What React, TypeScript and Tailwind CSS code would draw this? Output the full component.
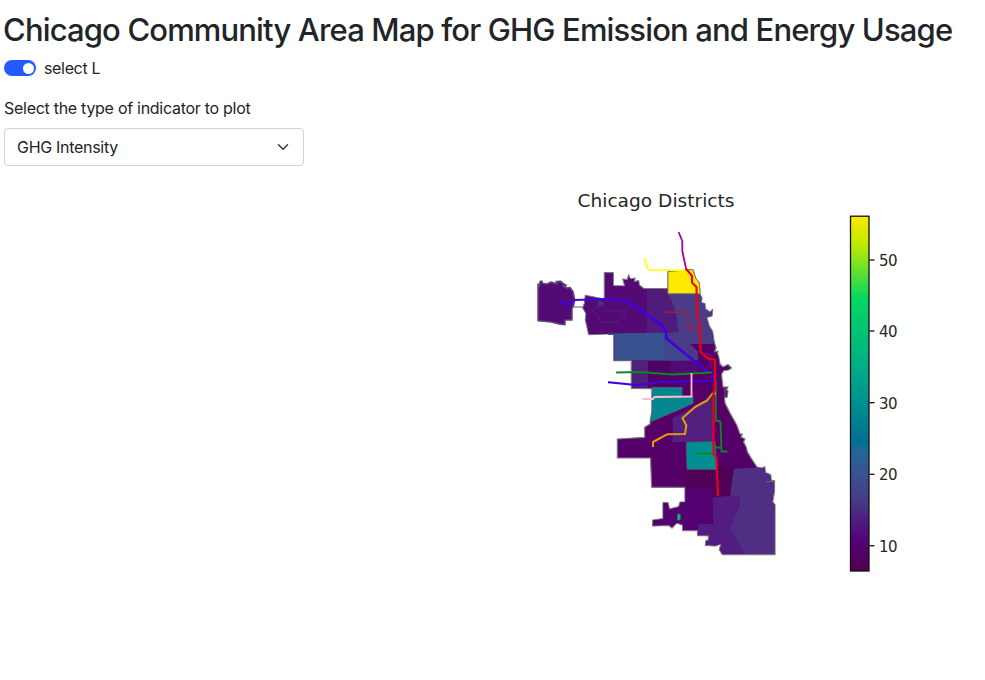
import { useState } from 'react';

const ticks = [
  { value: 50, y: 260 },
  { value: 40, y: 331 },
  { value: 30, y: 402.7 },
  { value: 20, y: 474.3 },
  { value: 10, y: 545.7 },
];

function ChicagoMap({ showLines }: { showLines: boolean }) {
  return (
    <svg
      className="block w-full"
      viewBox="0 180 985 400"
      width="985"
      height="400"
      role="img"
      aria-label="Chicago Districts"
    >
      <defs>
        <linearGradient id="scale" x1="0" y1="0" x2="0" y2="1">
          <stop offset="0" stopColor="#fbe900" />
          <stop offset="0.08" stopColor="#bfe900" />
          <stop offset="0.235" stopColor="#02d763" />
          <stop offset="0.42" stopColor="#01af85" />
          <stop offset="0.52" stopColor="#009190" />
          <stop offset="0.635" stopColor="#006f93" />
          <stop offset="0.66" stopColor="#216895" />
          <stop offset="0.73" stopColor="#3a5190" />
          <stop offset="0.8" stopColor="#473a87" />
          <stop offset="0.9" stopColor="#54087a" />
          <stop offset="0.93" stopColor="#530070" />
          <stop offset="1" stopColor="#50004e" />
        </linearGradient>
      </defs>

      <g fontFamily="'DejaVu Sans', sans-serif" fill="#262626">
        <text x="577.5" y="207" fontSize="18" textLength="157" lengthAdjust="spacingAndGlyphs">
          Chicago Districts
        </text>
        {ticks.map((t) => (
          <text key={t.value} x="879" y={t.y + 6} fontSize="15" textLength="18.5">
            {t.value}
          </text>
        ))}
      </g>

      {/* City outline */}
      <g fill="#540068" stroke="#7d7880" strokeWidth="1.2" strokeLinejoin="round">
        <path
          fill="#530a75"
          stroke="#66477a"
          strokeWidth="1.5"
          d="M538 284L539.5 286L540 281.5L541.7 281L543 283.5L547 284L551 282L557 284L556 281.5L560.7 281.3L564 284L566.5 285.5L563 286L567 288L570 287.5L573 291.5L574.7 300L573.5 306L572 308.7V320H565V324.7L559 324L551 322L538 320.7Z"
        />
        <path d="M573.5 307H583.5" />
        <path d="M585.3 295.3L604.3 299V272.7H613.3V285.7L624.7 286L622.7 279L627.3 279.7L628.7 274.7L630 279L635.3 278L634 281.5L638.7 280.7L639.3 285L644 288.7H668V271.5L692.7 269.5L696 279L699.3 282.7L700 294L702 298L701.3 302.7L705 303.5L705.3 308.7L710 312L712.7 309.5L712 316L706.7 317.5L709.3 326L712.7 331.5L714 341L716 348L714.5 352L718 351L717.5 353L719 358L720 364L723 367L728 364.5L731.5 368L728.5 370L724 370.5L721.5 374L723 387H728L726.5 390L728 391L727 397.5H724.5L725 403L730 413L736.7 425L740 434L742.5 434L741 437L745 439L743.5 442L746 446.5L747.5 452L751 458L757 467L762 468.5L764.7 466.7L765.5 472.5L770.7 474.7L771.3 480.5H774.5V491L772.7 502L775 504.7V554.7H722.3L719.3 549.5L721 544L715.3 546L705.3 545.3L706 540.5L708.3 540V535.7H697.5V530.7H682.7V525.3L676.7 523L672 528L668.7 525.3L652.7 526V520L663 518.7V502.7H668L669.5 509L678.7 506.7L680 502H685V487.3H651.7L650.5 458H617.3V439L644.7 437.3V427.3L650 424L652 411V388.7L631.3 388.3V360.7H613.7V334H607.3L588.7 334.7L586.7 325.5L585.3 319.5L586 313.5L582.7 308L584.5 303Z" />
      </g>

      {/* Community areas */}
      <g>
        <path
          fill="#530a75"
          d="M585.8 296L605 299.5V273.3H612.8V286.3L625.5 286.5L624 280H628L629 276.5L631 280L634 279L633 282.5L638 281.5L639 285.8L644 289.2H648V333.3L589 334L587.3 325.5L586 319.5L586.6 313.5L583.4 308L585.2 303Z"
        />
        <path fill="#42317e" d="M597 300L604 302L603 305.5L598 305.7Z" />
        <path
          fill="none"
          stroke="#4d2576"
          strokeWidth="1"
          d="M592 311.3L596 307.3L603.3 305.3L607 311L624.7 310.7V314.7L617.3 321.3L600.7 323L598 314.7L592 311.3"
        />
        <path fill="#511b7b" d="M647 289.3H669L671.3 300L675.3 310L677 319L676 325L680 331L647 333.3Z" />
        <path fill="#3a518f" d="M608 333.5L665 332.5V360.5H614.3V335H608Z" />
        <path
          fill="#493b86"
          d="M668 294H699.4L701.4 298L701 303.2L704.5 304L705 309L709 312.5L711.5 311.5L711.2 315.5L706 317.2L708.8 326.4L712 332L713.4 344H690.5L686 348L698 352L697 360.7H664.7V333L679 331L676 324L677 319L675 310L671 300Z"
        />
        <path fill="#530a75" d="M664 361L698 360.5L699 373H664Z" />
        <path fill="#4f217c" d="M632 361H648V388H632Z" />
        <path fill="#510063" d="M648 361H671V388H648Z" />
        <path fill="#530a75" d="M671 361H697V374L671 375Z" />
        <path fill="#3f4689" d="M664.7 335H667L690 357L697 360.5H664.7Z" />
        <path fill="#493b86" d="M665 333H680L698 352V360H694L670 341L665 337Z" />
        <path fill="#06868e" stroke="#536980" strokeWidth="0.7" d="M652 387.5H682V396H693V403.3L680 409.3L650 422L652 411Z" />
        <path fill="#52217f" d="M713.3 391V442H672.7V418L695 407L706.7 401Z" />
        <path fill="#500056" d="M687 469L717 466L734 468.5L730 497H714.5L713 487H686Z" />
        <path fill="#008e91" stroke="#546078" strokeWidth="0.7" d="M686.3 442.3L715 441.7L717 469.3H687Z" />
        <path fill="#530070" d="M685.5 487.3H712.7V524H697.5V530H683.2V525L677 522.5L672 527L669 524.8L653.3 525.5V520.5L663.5 519V503.3H667.5L669 509.5L679 507.3L680.5 502.6H685.5Z" />
        <path fill="#531d7f" d="M712.7 497.3L730 496H744V554H722.6L720.2 549.5L721.5 543.5L715.3 545.5L706 544.8L706.5 541H709V535.2H698V524.3H713.3Z" />
        <path fill="#4e2f83" d="M734 468.7L764.2 467.5L765 473L770.3 475.3L771 481H774V491L772.2 502L774.5 505V554H744.7L730 528.7L736.7 512L740 506V497L730 495.5Z" />
        <path fill="#00b978" stroke="#386777" strokeWidth="0.6" d="M677.3 514H680.3V520H677.3Z" />
        <path fill="#fbe900" stroke="#858255" strokeWidth="1" d="M668 271.5L692.7 269.5L696 279L699.3 282.7L700 293.7H668Z" />
        <path fill="none" stroke="#6e6772" strokeWidth="1" d="M766 481.5H774M725 388V397" />
      </g>

      {/* Train lines */}
      {showLines && (
        <g fill="none" strokeLinejoin="round" strokeLinecap="square" strokeWidth="1.8">
          <path stroke="#ffff20" d="M644.5 259L647.5 268L650 270.2H686" />
          <path stroke="#a8009c" d="M679 233L682.3 241V251L686.3 269.7" />
          <path stroke="#a91d3c" strokeWidth="1.6" d="M666 312.3H687.7L688.5 329H700" />
          <path stroke="#8c0073" strokeWidth="1.3" d="M703 354H710V362L714 373V379" />
          <path
            stroke="#4100e4"
            strokeWidth="2"
            d="M561 303L563 301.5L566.5 305L575 300L605 299L627 301L652 318L663 327L666 331.5V338M609 382.3L636 385L663 382L714 380.5L714.5 373L711.5 372.5"
          />
          <path stroke="#4100e4" strokeWidth="2.6" d="M627 301L652 318L663 327L666 331.5V338L708 372.5" />
          <path stroke="#0c8728" d="M617 372.5L640 372L673 374.5L711 372.5M715.8 381V420.5L720.5 421.5L721.5 451.5H726.5M696 453.5H714M715 447.5H720" />
          <path stroke="#ffc0cb" d="M643.5 399H653L654.5 397L691.5 396.5V374" />
          <path stroke="#e7990c" strokeWidth="2" d="M653 446V442L667 434.3L685 434L686.3 425.5L682.5 418L695 407L707 400.5L712.5 393.5H715" />
          <path stroke="#ee0014" strokeWidth="2.1" d="M687 270L692 276V282.5L696.5 287L697 312L700 326L700.5 352L708 358.8L715 359.5V388L713.5 394V453L716.5 458L718 495" />
        </g>
      )}

      {/* Colour scale */}
      <rect x="850.5" y="216.2" width="18.5" height="354.8" fill="url(#scale)" stroke="#101010" strokeWidth="1.3" />
      {ticks.map((t) => (
        <path key={t.value} d={`M869.5 ${t.y}h5`} stroke="#111" strokeWidth="1.3" />
      ))}
    </svg>
  );
}

export default function App() {
  const [showLines, setShowLines] = useState(true);

  return (
    <main className="min-h-screen overflow-hidden bg-white pl-1 pt-[11px] font-['Inter',sans-serif] text-base text-[#212529]">
      <h1 className="-ml-px h-[38px] whitespace-nowrap text-[31px] font-medium leading-[38px] tracking-[-0.85px]">
        Chicago Community Area Map for GHG Emission and Energy Usage
      </h1>
      <div className="mt-[7px] flex h-6 items-center gap-2">
        <button
          type="button"
          role="switch"
          aria-checked={showLines}
          aria-label="select L"
          onClick={() => setShowLines(!showLines)}
          className={`flex h-4 w-8 items-center rounded-full px-[2.5px] ${showLines ? 'justify-end bg-[#2459ff]' : 'justify-start bg-gray-300'}`}
        >
          <span className="size-[11px] rounded-full bg-white" />
        </button>
        <span className="tracking-[-0.34px]">select L</span>
      </div>
      <p className="mt-4 h-6 leading-6 tracking-[-0.28px]">Select the type of indicator to plot</p>
      <button
        type="button"
        className="mt-2 flex h-[38px] w-[300px] items-center justify-between rounded border border-[#ced4da] pl-3 pr-[14px] text-left tracking-[-0.3px]"
      >
        <span>GHG Intensity</span>
        <svg className="h-3 w-3" viewBox="0 0 16 16" fill="none" stroke="#343a40" strokeWidth="2" strokeLinecap="round" strokeLinejoin="round">
          <path d="m2 5 6 6 6-6" />
        </svg>
      </button>
      <div className="-ml-1 mt-[14px]">
        <ChicagoMap showLines={showLines} />
      </div>
    </main>
  );
}
